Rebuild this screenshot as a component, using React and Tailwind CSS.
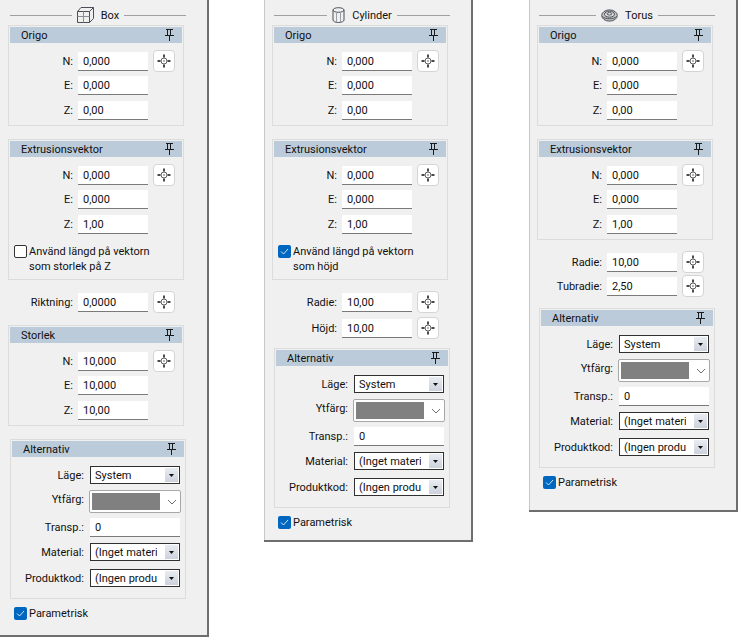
import React from "react";

function PinIcon() {
  return (
    <svg width="9" height="12" viewBox="0 0 9 12" className="block" shapeRendering="crispEdges">
      <path d="M1 0.5H8M2.5 0.5V6.5M5.5 0.5V6.5M0 6.5H9" stroke="#1a1a1a" fill="none" />
      <path d="M4 7H5V12H4Z" fill="#1a1a1a" />
    </svg>
  );
}

function PickButton() {
  return (
    <button className="ml-[5px] self-start -mt-[2px] w-[22px] h-[22px] bg-white border border-[#d4d4d4] rounded-[4px] flex items-center justify-center">
      <svg width="16" height="16" viewBox="0 0 16 16" className="block">
        <circle cx="8" cy="8" r="3" fill="none" stroke="#5a5a5a" />
        <circle cx="8" cy="8" r="0.8" fill="#5a5a5a" />
        <path d="M8 1.5V4.5M8 11.5V14.5M1.5 8H4.5M11.5 8H14.5" stroke="#4a4a4a" strokeWidth="2" />
      </svg>
    </button>
  );
}

function Field({ label, value, pick, className = "" }) {
  return (
    <div className={`flex h-[19px] ${className}`}>
      <div className="w-[68px] pr-[5px] text-right leading-[20px]">{label}</div>
      <div className="w-[70px] h-[19px] bg-white border-b border-[#7a7a7a] pl-[5px] leading-[20px]">{value}</div>
      {pick && <PickButton />}
    </div>
  );
}

function GroupHeader({ title }) {
  return (
    <div className="h-[16px] bg-[#bccbda] flex items-center justify-between pl-[11px] pr-[8px] leading-[16px]">
      <span className="mt-[2px]">{title}</span>
      <PinIcon />
    </div>
  );
}

function Vector({ title, z, children, className = "" }) {
  const [n, e, zv] = z;
  return (
    <div className={`ml-[8px] w-[176px] border border-[#dcdcdc] p-[1px] ${className}`}>
      <GroupHeader title={title} />
      <div className="pb-[4px]">
        <Field className="mt-[9px]" label="N:" value={n} pick />
        <Field className="mt-[5px]" label="E:" value={e} />
        <Field className="mt-[6px]" label="Z:" value={zv} />
        {children}
      </div>
    </div>
  );
}

function SelectBox({ value }) {
  return (
    <div className="ml-[1px] w-[90px] h-[18px] border border-[#303030] bg-white flex items-center justify-between">
      <span className="pl-[4px] mt-[2px] w-[66px] overflow-hidden whitespace-nowrap leading-[16px]">{value}</span>
      <span className="w-[13px] h-[14px] mr-[1px] bg-gradient-to-b from-[#e8ecf2] to-[#ccd2dc] flex items-center justify-center">
        <svg width="5" height="3" viewBox="0 0 5 3" className="block">
          <path d="M0 0H5L2.5 3Z" fill="#111" />
        </svg>
      </span>
    </div>
  );
}

function OptRow({ label, className = "", children }) {
  return (
    <div className={`flex items-start ${className}`}>
      <div className="w-[77px] pr-[5px] text-right leading-[20px] whitespace-nowrap">{label}</div>
      {children}
    </div>
  );
}

function Alternativ({ className = "" }) {
  return (
    <div className={`ml-[10px] w-[176px] h-[160px] border border-[#dcdcdc] p-[1px] ${className}`}>
      <GroupHeader title="Alternativ" />
      <OptRow label="Läge:" className="mt-[9px] h-[18px]">
        <SelectBox value="System" />
      </OptRow>
      <OptRow label="Ytfärg:" className="mt-[6px] h-[23px]">
        <div className="w-[92px] h-[23px] border border-[#a8a8a8] rounded-[2px] bg-white flex items-center pl-[2px]">
          <div className="w-[68px] h-[17px] bg-[#808080]" />
          <svg width="10" height="6" viewBox="0 0 10 6" className="ml-[7px] block">
            <path d="M1 1L5 5L9 1" fill="none" stroke="#707070" />
          </svg>
        </div>
      </OptRow>
      <OptRow label="Transp.:" className="mt-[5px] h-[19px]">
        <div className="ml-[1px] w-[90px] h-[19px] bg-white border-b border-[#7a7a7a] pl-[5px] leading-[20px]">0</div>
      </OptRow>
      <OptRow label="Material:" className="mt-[6px] h-[18px]">
        <SelectBox value="(Inget material)" />
      </OptRow>
      <OptRow label="Produktkod:" className="mt-[8px] h-[18px]">
        <SelectBox value="(Ingen produktkod)" />
      </OptRow>
    </div>
  );
}

function Check({ checked, className = "", children }) {
  return (
    <div className={`flex items-start ${className}`}>
      {checked ? (
        <span className="w-[13px] h-[13px] rounded-[2px] bg-[#0067c0] flex items-center justify-center shrink-0">
          <svg width="9" height="7" viewBox="0 0 9 7" className="block">
            <path d="M1 3.5L3.5 6L8 1" fill="none" stroke="#cfe3f5" />
          </svg>
        </span>
      ) : (
        <span className="w-[13px] h-[13px] rounded-[2px] bg-white border border-[#333] shrink-0" />
      )}
      <span className="ml-[2px] -mt-[1px] leading-[15px]">{children}</span>
    </div>
  );
}

function Title({ text, children }) {
  return (
    <div className="ml-[10px] w-[176px] h-[18px] flex items-center">
      <div className="flex-1 h-px bg-[#a0a0a0]" />
      <div className="mx-[5px] flex items-center gap-[7px]">
        {children}
        <span className="leading-[18px] mt-[2px]">{text}</span>
      </div>
      <div className="flex-1 h-px bg-[#a0a0a0]" />
    </div>
  );
}

function BoxIcon() {
  return (
    <svg width="17" height="16" viewBox="0 0 17 16" className="block">
      <path d="M0.5 4.5H12.5V15.5H0.5ZM0.5 4.5L4 0.5H16.5V11.5L12.5 15.5M12.5 4.5L16.5 0.5" fill="none" stroke="#4a4f57" />
      <path d="M6.5 4.5V15.5M0.5 9.5H12.5" fill="none" stroke="#8a8f97" />
    </svg>
  );
}

function CylinderIcon() {
  return (
    <svg width="13" height="16" viewBox="0 0 13 16" className="block">
      <ellipse cx="6.5" cy="3" rx="5.5" ry="2.3" fill="none" stroke="#4a4f57" />
      <path d="M1 3V13C1 14.4 3.5 15.5 6.5 15.5S12 14.4 12 13V3" fill="none" stroke="#4a4f57" />
      <path d="M4.5 5.5V15M8.5 5.5V15" fill="none" stroke="#9a9fa7" />
    </svg>
  );
}

function TorusIcon() {
  return (
    <svg width="17" height="13" viewBox="0 0 17 13" className="block">
      <ellipse cx="8.5" cy="6.5" rx="7.8" ry="5.6" fill="#c4c4c4" stroke="#4a4f57" />
      <ellipse cx="8.5" cy="5.2" rx="5" ry="3" fill="#dedede" stroke="#4a4f57" />
      <ellipse cx="8.5" cy="4.8" rx="2.4" ry="1.2" fill="#f0f0f0" stroke="#4a4f57" />
      <path d="M1.5 7.5C4 10.5 13 10.5 15.5 7.5" fill="none" stroke="#4a4f57" />
    </svg>
  );
}

function Window({ className = "", children }) {
  return (
    <div className={`w-[209px] shrink-0 bg-[#f0f0f0] border-r-2 border-b-2 border-[#6e6e6e] pt-[6px] ${className}`}>
      {children}
    </div>
  );
}

const ORIGO = ["0,000", "0,000", "0,00"];
const EXTR = ["0,000", "0,000", "1,00"];

export default function App() {
  return (
    <div
      className="w-[738px] h-[637px] bg-white flex items-start overflow-hidden text-[11px] text-[#101010]"
      style={{ fontFamily: 'Roboto, "Open Sans", sans-serif' }}
    >
      {/* Box */}
      <Window className="h-[637px]">
        <Title text="Box"><BoxIcon /></Title>
        <Vector title="Origo" z={ORIGO} className="mt-[1px]" />
        <Vector title="Extrusionsvektor" z={EXTR} className="mt-[13px]">
          <Check className="mt-[11px] ml-[4px]">
            Använd längd på vektorn
            <br />
            som storlek på Z
          </Check>
        </Vector>
        <Field label="Riktning:" value="0,0000" pick className="mt-[13px] ml-[10px]" />
        <Vector title="Storlek" z={["10,000", "10,000", "10,00"]} className="mt-[13px]" />
        <Alternativ className="mt-[13px]" />
        <Check checked className="mt-[8px] ml-[14px]">Parametrisk</Check>
      </Window>

      {/* Cylinder */}
      <Window className="ml-[55px] h-[542px] shadow-[inset_1px_0_0_#c8c8c8]">
        <Title text="Cylinder"><CylinderIcon /></Title>
        <Vector title="Origo" z={ORIGO} className="mt-[1px]" />
        <Vector title="Extrusionsvektor" z={EXTR} className="mt-[13px]">
          <Check checked className="mt-[11px] ml-[4px]">
            Använd längd på vektorn
            <br />
            som höjd
          </Check>
        </Vector>
        <Field label="Radie:" value="10,00" pick className="mt-[13px] ml-[10px]" />
        <Field label="Höjd:" value="10,00" pick className="mt-[7px] ml-[10px]" />
        <Alternativ className="mt-[10px]" />
        <Check checked className="mt-[8px] ml-[14px]">Parametrisk</Check>
      </Window>

      {/* Torus */}
      <Window className="ml-[56px] h-[512px] shadow-[inset_1px_0_0_#c8c8c8]">
        <Title text="Torus"><TorusIcon /></Title>
        <Vector title="Origo" z={ORIGO} className="mt-[1px]" />
        <Vector title="Extrusionsvektor" z={EXTR} className="mt-[13px]" />
        <Field label="Radie:" value="10,00" pick className="mt-[13px] ml-[10px]" />
        <Field label="Tubradie:" value="2,50" pick className="mt-[5px] ml-[10px]" />
        <Alternativ className="mt-[12px]" />
        <Check checked className="mt-[8px] ml-[14px]">Parametrisk</Check>
      </Window>
    </div>
  );
}
